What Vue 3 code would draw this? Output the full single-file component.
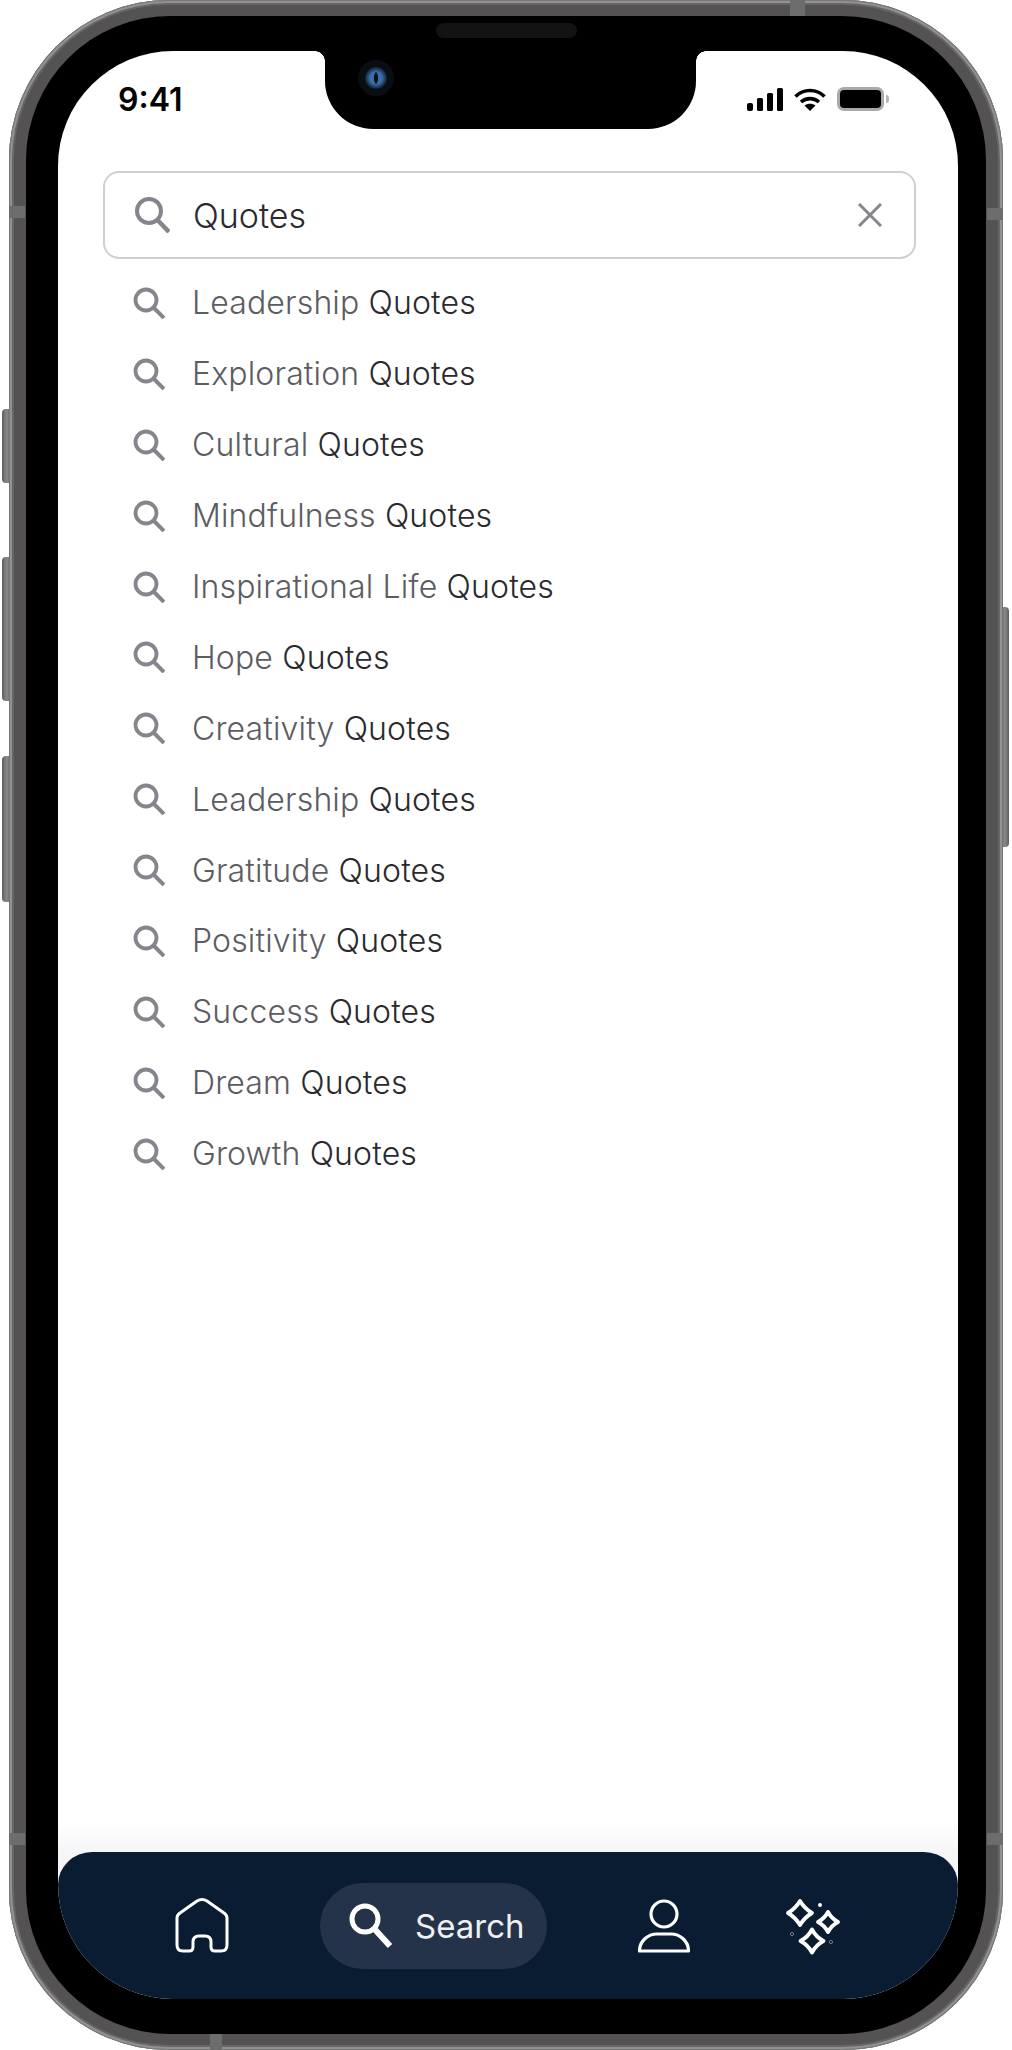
<template>
  <div class="page">
    <span class="side-btn" style="top: 409px; height: 74px"></span>
    <span class="side-btn" style="top: 557px; height: 144px"></span>
    <span class="side-btn" style="top: 756px; height: 146px"></span>
    <span class="power-btn"></span>

    <div class="phone">
      <span class="band band-top"></span>
      <span class="band band-bottom"></span>
      <span class="band band-left" style="top: 206px"></span>
      <span class="band band-right" style="top: 208px"></span>
      <span class="band band-left" style="top: 1833px"></span>
      <span class="band band-right" style="top: 1833px"></span>

      <div class="bezel">
        <span class="speaker"></span>

        <div class="screen">
          <div class="notch">
            <span class="camera"></span>
          </div>

          <div class="status">
            <span class="time">9:41</span>
            <div class="status-icons">
              <svg width="36" height="23" viewBox="0 0 36 23" fill="#000">
                <rect x="0" y="15" width="6" height="8" rx="2" />
                <rect x="10" y="10" width="6" height="13" rx="1.5" />
                <rect x="20" y="5" width="6" height="18" rx="1.5" />
                <rect x="30" y="0" width="6" height="23" rx="1.5" />
              </svg>
              <svg width="32" height="23" viewBox="0 0 32 23" fill="none" stroke="#000" stroke-width="3.6">
                <path d="M1.5 8.5C9.5 0.5 22.5 0.5 30.5 8.5" />
                <path d="M7 14C12 9.5 20 9.5 25 14" />
                <path d="M16 23L10.5 17.5C13.5 15 18.5 15 21.5 17.5Z" fill="#000" stroke="none" />
              </svg>
              <div class="battery"><span></span></div>
            </div>
          </div>

          <div class="search-box">
            <svg class="box-icon" width="36" height="36" viewBox="0 0 36 36" fill="none" stroke="#85858e">
              <circle cx="15" cy="14" r="12" stroke-width="4" />
              <path d="M23.5 23L35 35" stroke-width="4.5" />
            </svg>
            <span class="query">Quotes</span>
            <svg class="close" width="24" height="24" viewBox="0 0 24 24" stroke="#85858e" stroke-width="3">
              <path d="M1 1L23 23M23 1L1 23" />
            </svg>
          </div>

          <div class="list">
            <div v-for="(item, i) in suggestions" :key="i" class="row">
              <svg width="32" height="32" viewBox="0 0 32 32" fill="none" stroke="#85858e">
                <circle cx="13" cy="13" r="10.5" stroke-width="3.8" />
                <path d="M20.5 20.5L31 31" stroke-width="4" />
              </svg>
              <span class="label">{{ item }} <b>Quotes</b></span>
            </div>
          </div>

          <nav class="nav">
            <svg width="54" height="58" viewBox="0 0 54 58" fill="none" stroke="#fff" stroke-width="3" stroke-linejoin="round">
              <path d="M2 21Q2 18 5 16L22 4Q27 1 32 4L49 16Q52 18 52 21V48Q52 54 46 54H40Q36 54 36 50V45Q36 39 30 39H24Q18 39 18 45V50Q18 54 14 54H8Q2 54 2 48Z" />
            </svg>

            <div class="pill">
              <svg width="44" height="46" viewBox="0 0 44 46" fill="none" stroke="#fff">
                <circle cx="16" cy="16" r="13" stroke-width="5" />
                <path d="M25.5 26L41 43" stroke-width="6" />
              </svg>
              <span>Search</span>
            </div>

            <svg width="54" height="54" viewBox="0 0 54 54" fill="none" stroke="#fff" stroke-width="3.2" stroke-linejoin="round">
              <circle cx="26" cy="15" r="13" />
              <path d="M1.5 52C1.5 42 10 35 19 35H33C42 35 50.5 42 50.5 52Z" />
            </svg>

            <svg width="60" height="60" viewBox="0 0 60 60" fill="none" stroke="#fff" stroke-width="3.8" stroke-linejoin="round">
              <path d="M17 5Q21.500 12.500 29 17Q21.500 21.500 17 29Q12.500 21.500 5 17Q12.500 12.500 17 5Z" />
              <path d="M45 16Q48.500 22.500 55 26Q48.500 29.500 45 36Q41.500 29.500 35 26Q41.500 22.500 45 16Z" />
              <path d="M29 33.500Q33 41 40.500 45Q33 49 29 56.500Q25 49 17.500 45Q25 41 29 33.500Z" />
              <circle cx="37" cy="9" r="2" fill="#fff" stroke="none" />
              <circle cx="9" cy="38" r="1.6" stroke="#6f7c8d" stroke-width="1" />
              <circle cx="48" cy="46" r="1.6" stroke="#6f7c8d" stroke-width="1" />
            </svg>
          </nav>
        </div>
      </div>
    </div>
  </div>
</template>

<script setup>
const suggestions = [
  'Leadership',
  'Exploration',
  'Cultural',
  'Mindfulness',
  'Inspirational Life',
  'Hope',
  'Creativity',
  'Leadership',
  'Gratitude',
  'Positivity',
  'Success',
  'Dream',
  'Growth'
]
</script>

<style>
html,
body {
  margin: 0;
  background: #fff;
}
</style>

<style scoped>
.page {
  position: relative;
  width: 1012px;
  height: 2050px;
  padding-left: 9px;
  box-sizing: border-box;
  overflow: hidden;
  font-family: Inter, "Noto Sans", sans-serif;
}

.side-btn {
  position: absolute;
  left: 2px;
  width: 8px;
  border-radius: 4px 0 0 4px;
  background: linear-gradient(90deg, #5e5e5e, #8a8a8a 60%, #6a6a6a);
}

.power-btn {
  position: absolute;
  left: 1002px;
  top: 607px;
  width: 7px;
  height: 240px;
  border-radius: 0 4px 4px 0;
  background: linear-gradient(90deg, #6a6a6a, #8a8a8a 40%, #5e5e5e);
}

.phone {
  position: relative;
  width: 994px;
  height: 2050px;
  padding: 16px 17px;
  box-sizing: border-box;
  border-radius: 160px;
  background: #545252;
  box-shadow: inset 0 0 0 1px #777, inset 0 0 0 3px #929292, inset 0 0 0 5px #666;
}

.band {
  position: absolute;
  background: #6d6d6d;
}

.band-top {
  left: 781px;
  top: 0;
  width: 15px;
  height: 16px;
}

.band-bottom {
  left: 201px;
  bottom: 0;
  width: 12px;
  height: 16px;
}

.band-left {
  left: 0;
  width: 16px;
  height: 12px;
}

.band-right {
  right: 0;
  width: 16px;
  height: 12px;
}

.bezel {
  position: relative;
  height: 100%;
  padding: 35px 28px 35px 32px;
  box-sizing: border-box;
  border-radius: 144px;
  background: #000;
}

.speaker {
  position: absolute;
  z-index: 2;
  left: 410px;
  top: 7px;
  width: 141px;
  height: 15px;
  border-radius: 8px;
  background: #131313;
}

.screen {
  position: relative;
  display: flex;
  flex-direction: column;
  height: 100%;
  overflow: hidden;
  border-radius: 115px;
  background: #fff;
}

.notch {
  position: absolute;
  left: 267px;
  top: 0;
  width: 371px;
  height: 78px;
  border-radius: 0 0 48px 48px;
  background: #000;
}

.notch::before,
.notch::after {
  content: "";
  position: absolute;
  top: 0;
  width: 10px;
  height: 10px;
}

.notch::before {
  left: -10px;
  background: radial-gradient(circle at 0 100%, transparent 9.5px, #000 10px);
}

.notch::after {
  right: -10px;
  background: radial-gradient(circle at 100% 100%, transparent 9.5px, #000 10px);
}

.camera {
  position: absolute;
  left: 33px;
  top: 9px;
  width: 36px;
  height: 36px;
  border-radius: 50%;
  box-sizing: border-box;
  border: 7px solid #0a0d12;
  background: radial-gradient(ellipse 2px 6px, #08101c 90%, transparent), radial-gradient(circle, #3a6ea8 0 6px, #101f33 11px);
}

.status {
  display: flex;
  align-items: center;
  justify-content: space-between;
  flex-shrink: 0;
  height: 96px;
  padding: 0 74px 0 60px;
}

.time {
  font-size: 32px;
  font-weight: 600;
  color: #000;
}

.status-icons {
  display: flex;
  align-items: center;
  gap: 11px;
}

.status-icons svg {
  display: block;
}

.battery {
  position: relative;
  width: 47px;
  height: 24px;
  padding: 3px;
  box-sizing: border-box;
  border-radius: 7px;
  background: #a9a9a9;
}

.battery span {
  display: block;
  height: 100%;
  border-radius: 4px;
  background: #000;
}

.battery::after {
  content: "";
  position: absolute;
  left: 49px;
  top: 8px;
  width: 3px;
  height: 8px;
  border-radius: 0 3px 3px 0;
  background: #b4b4b4;
}

.search-box {
  display: flex;
  align-items: center;
  flex-shrink: 0;
  height: 88px;
  margin: 24px 42px 0 45px;
  padding: 0 32px 0 29px;
  box-sizing: border-box;
  border: 2px solid #cfcfcf;
  border-radius: 16px;
}

.query {
  flex: 1;
  margin-left: 23px;
  font-size: 34px;
  font-weight: 360;
  color: #2a2a2e;
}

.list {
  flex: 1;
  padding-top: 8.5px;
  background: linear-gradient(#fff calc(100% - 64px), #f6f6f8 calc(100% - 34px));
}

.row {
  display: flex;
  align-items: center;
  height: 70.9px;
  padding-left: 75px;
}

.row svg {
  flex-shrink: 0;
}

.label {
  margin-left: 27px;
  font-size: 32px;
  font-weight: 360;
  letter-spacing: 0.15px;
  color: #5c5c63;
}

.label b {
  font-weight: 360;
  color: #2a2a2e;
}

.nav {
  display: flex;
  align-items: center;
  gap: 91px;
  flex-shrink: 0;
  height: 147px;
  padding-left: 117px;
  box-sizing: border-box;
  border-radius: 34px 34px 0 0 / 33px 33px 0 0;
  background: #0a1c32;
  margin-top: -34px;
}

.pill {
  display: flex;
  align-items: center;
  gap: 22px;
  width: 227px;
  height: 86px;
  padding-left: 29px;
  box-sizing: border-box;
  border-radius: 43px;
  background: #243349;
  font-size: 33px;
  font-weight: 380;
  color: #eef0f3;
}
</style>
